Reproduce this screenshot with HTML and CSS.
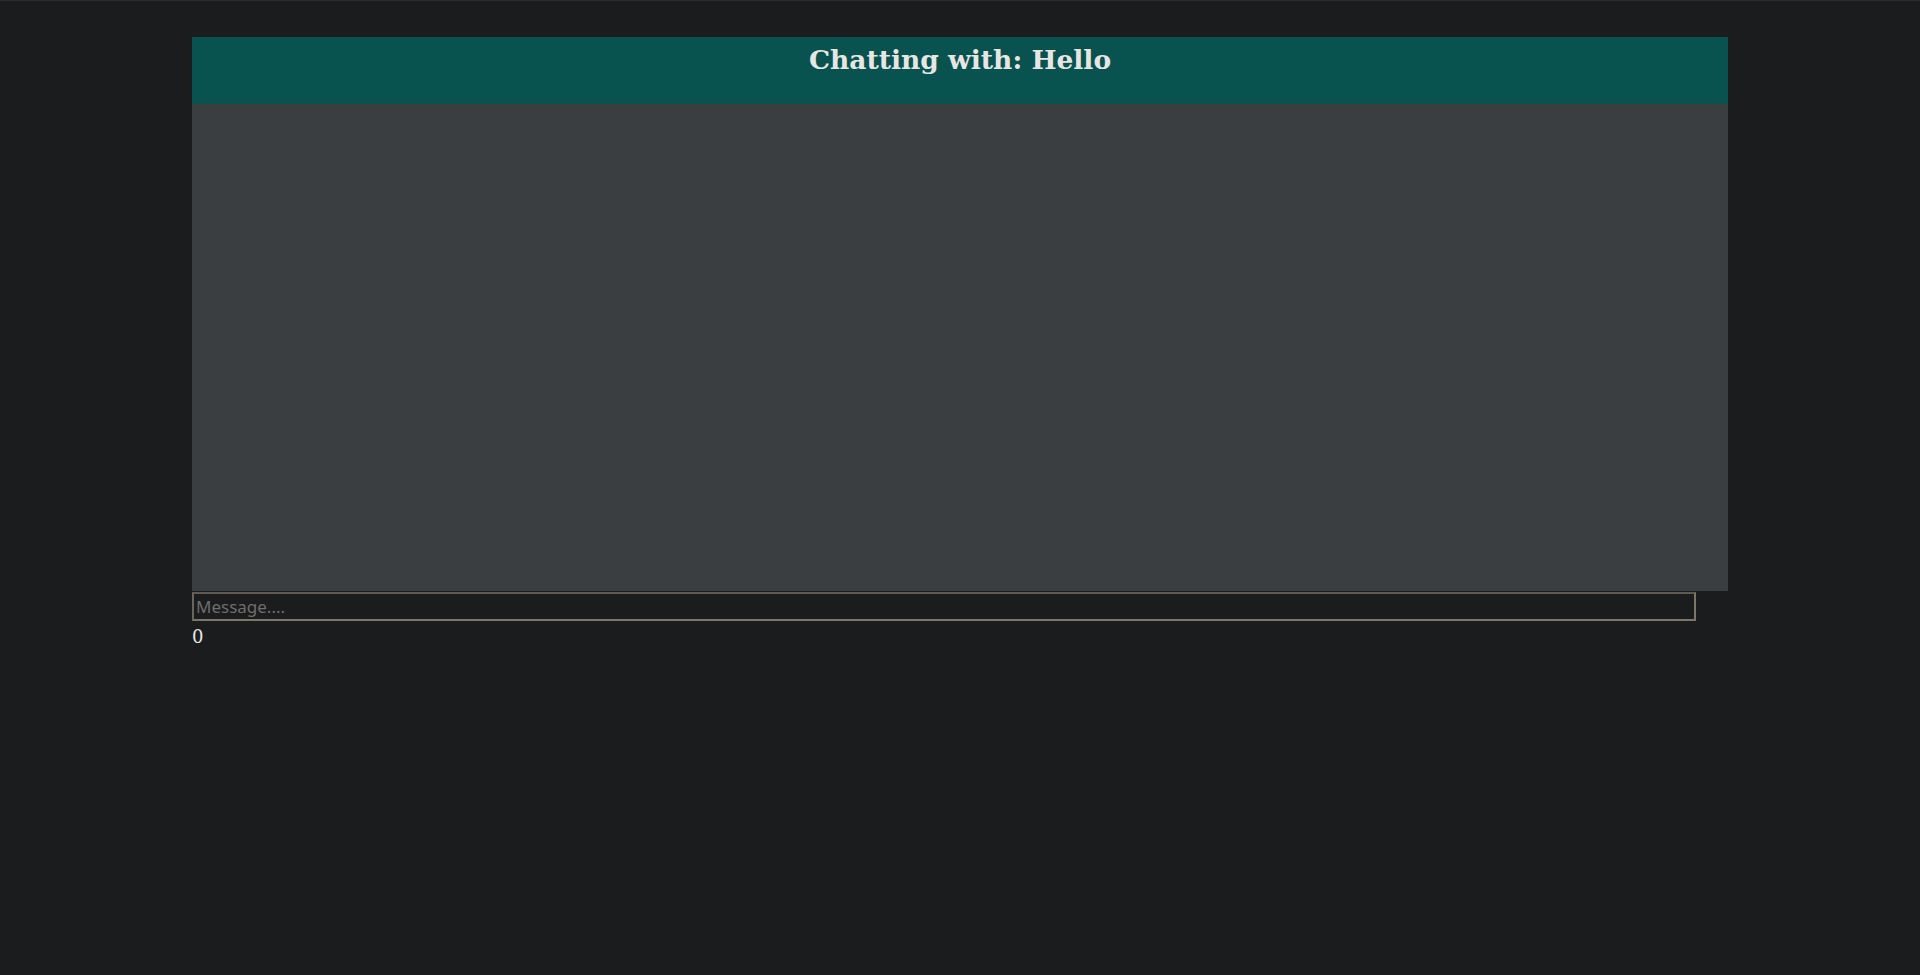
FILE: index.html
```html
<!DOCTYPE html>
<html>
<head>
<meta charset="utf-8">
<link rel="stylesheet" href="styles.css">
</head>
<body>
<div class="topline"></div>
<div class="chat">
  <div class="chat-header"><h1 class="title">Chatting with: Hello</h1></div>
  <div class="messages"></div>
  <input class="msg-input" type="text" placeholder="Message....">
  <div class="count">0</div>
</div>
</body>
</html>
```
FILE: styles.css
```css
html, body { margin: 0; padding: 0; background: #1b1c1e; }
body { font-family: "DejaVu Serif", serif; color: #e8e6e3; }
.topline { height: 1px; background: #2c2d31; }
.chat { width: 1536px; margin: 36px 0 0 192px; display: flex; flex-direction: column; align-items: flex-start; }
.chat-header { width: 100%; height: 67px; background: #085250; display: flex; justify-content: center; align-items: flex-start; }
.title { margin: 7px 0 0; font-size: 26.5px; font-weight: bold; color: #e8e6e3; line-height: 1.2; }
.messages { width: 100%; height: 487px; background: #3a3e41; }
.msg-input { margin: 1px 0 0; width: 1504px; height: 29px; box-sizing: border-box; background: #1b1c1e; border: 2px solid #7d7568; border-top-color: #5f5a53; border-left-color: #6a645b; color: #e8e6e3; font-family: "Noto Sans", sans-serif; font-size: 17px; padding: 0 2px; outline: none; }
.msg-input::placeholder { color: #6e6e6c; }
.count { font-size: 18px; margin-top: 5px; color: #e8e6e3; font-family: "DejaVu Serif", serif; }
```
